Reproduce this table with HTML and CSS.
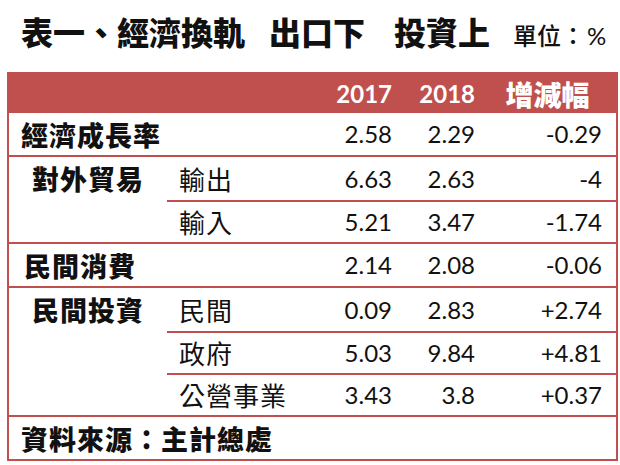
FILE: index.html
```html
<!DOCTYPE html>
<html lang="zh-Hant">
<head>
<meta charset="utf-8">
<title>表一、經濟換軌 出口下 投資上</title>
<link rel="stylesheet" href="styles.css">
</head>
<body>
<div class="page">
  <h1 class="title">
    <span class="t-main">表一、經濟換軌</span>
    <span class="t-part t-gap1">出口下</span>
    <span class="t-part t-gap2">投資上</span>
    <span class="t-unit">單位：<span class="pct">%</span></span>
  </h1>
  <table class="data">
    <colgroup>
      <col class="c1"><col class="c2"><col class="c3"><col class="c4"><col class="c5">
    </colgroup>
    <thead>
      <tr class="head">
        <th></th><th></th>
        <th class="num">2017</th>
        <th class="num">2018</th>
        <th class="chg">增減幅</th>
      </tr>
    </thead>
    <tbody>
      <tr class="r-first">
        <td class="lead" colspan="2">經濟成長率</td>
        <td class="num">2.58</td><td class="num">2.29</td><td class="num last">-0.29</td>
      </tr>
      <tr class="grp tall">
        <td class="group">對外貿易</td>
        <td class="sub">輸出</td>
        <td class="num">6.63</td><td class="num">2.63</td><td class="num last">-4</td>
      </tr>
      <tr class="subrow">
        <td class="blank"></td>
        <td class="sub">輸入</td>
        <td class="num">5.21</td><td class="num">3.47</td><td class="num last">-1.74</td>
      </tr>
      <tr class="grp">
        <td class="lead lead-b" colspan="2">民間消費</td>
        <td class="num">2.14</td><td class="num">2.08</td><td class="num last">-0.06</td>
      </tr>
      <tr class="grp tall">
        <td class="group">民間投資</td>
        <td class="sub">民間</td>
        <td class="num">0.09</td><td class="num">2.83</td><td class="num last">+2.74</td>
      </tr>
      <tr class="subrow">
        <td class="blank"></td>
        <td class="sub">政府</td>
        <td class="num">5.03</td><td class="num">9.84</td><td class="num last">+4.81</td>
      </tr>
      <tr class="subrow">
        <td class="blank"></td>
        <td class="sub">公營事業</td>
        <td class="num">3.43</td><td class="num">3.8</td><td class="num last">+0.37</td>
      </tr>
      <tr class="grp">
        <td class="lead" colspan="5">資料來源：主計總處</td>
      </tr>
    </tbody>
  </table>
</div>
</body>
</html>
```
FILE: styles.css
```css
html, body {
  margin: 0;
  padding: 0;
  background: #ffffff;
}

.page {
  width: 620px;
  height: 465px;
  color: #111111;
  font-family: "Lato", "Noto Sans CJK TC", sans-serif;
}

.title {
  margin: 0;
  height: 72px;
  box-sizing: border-box;
  padding: 15px 0 0 21px;
  display: flex;
  align-items: baseline;
  font-family: "Noto Sans CJK TC", sans-serif;
  font-weight: 900;
  font-size: 32px;
  line-height: 32px;
  white-space: nowrap;
}

.t-gap1 { margin-left: 24px; }
.t-gap2 { margin-left: 29px; }

.t-unit {
  margin-left: 23px;
  font-size: 24px;
  font-weight: 500;
}

.pct {
  font-family: "Lato", sans-serif;
  font-weight: 400;
  font-size: 24px;
  margin-left: 2px;
}

.data {
  margin-left: 7px;
  width: 611px;
  table-layout: fixed;
  border-collapse: separate;
  border-spacing: 0;
  border: 2px solid #c0504d;
}

.c1 { width: 158px; }
.c2 { width: 133px; }
.c3 { width: 100px; }
.c4 { width: 83px; }
.c5 { width: 133px; }

.data th,
.data td {
  padding: 0;
  vertical-align: middle;
  white-space: nowrap;
}

.head th {
  background: #c0504d;
  color: #ffffff;
  height: 39px;
  font-weight: 700;
}

.head th.num {
  font-size: 24px;
  text-align: right;
  padding-right: 8px;
}

.head th.chg {
  font-family: "Noto Sans CJK TC", sans-serif;
  font-size: 28px;
  font-weight: 900;
  line-height: 1;
  text-align: center;
  padding-right: 4px;
}

.data td {
  height: 42px;
  line-height: 1;
}

.data tr.tall td {
  height: 43px;
}

.data tr.grp td {
  border-top: 2px solid #c0504d;
}

.data tr.subrow td {
  height: 40px;
  border-top: 2px solid #c0504d;
}

.data tr.subrow td.blank {
  border-top: 0;
  height: 42px;
}

.lead {
  font-family: "Noto Sans CJK TC", sans-serif;
  font-weight: 900;
  font-size: 27px;
  letter-spacing: 1px;
  padding-left: 12px !important;
}

.lead-b {
  padding-left: 15px !important;
}

.group {
  font-family: "Noto Sans CJK TC", sans-serif;
  font-weight: 900;
  font-size: 27px;
  letter-spacing: 1px;
  text-align: center;
}

.sub {
  font-family: "Noto Sans CJK TC", sans-serif;
  font-weight: 400;
  font-size: 26px;
  letter-spacing: 1px;
  padding-left: 12px !important;
}

.data td.num {
  font-size: 24px;
  text-align: right;
  padding-right: 8px;
}

.data td.num.last {
  padding-right: 14px;
}
```
